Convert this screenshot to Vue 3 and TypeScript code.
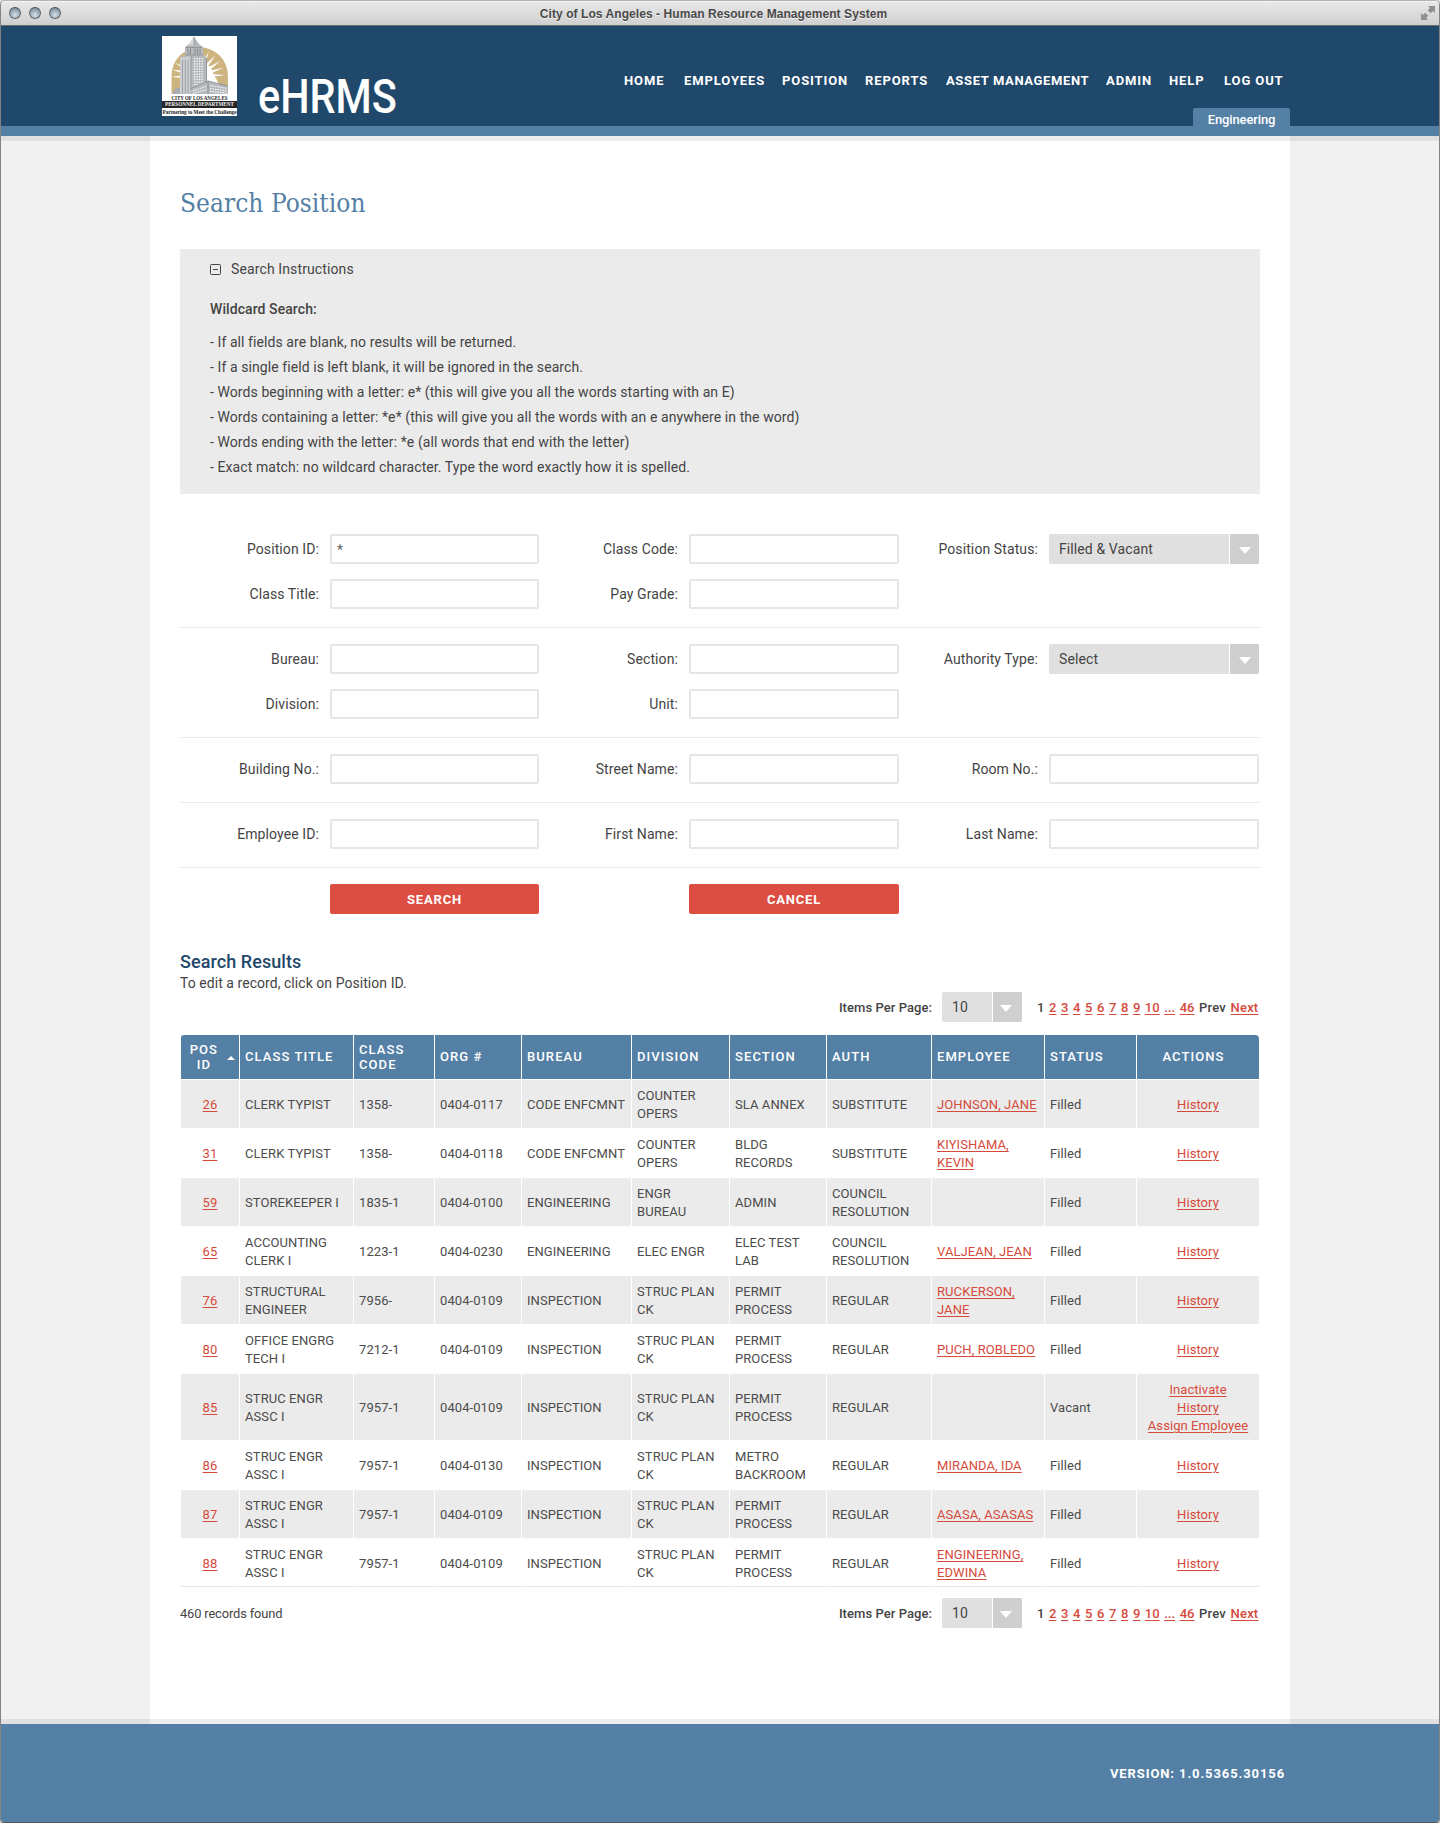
<script setup lang="ts">
interface NavItem { label: string; width: number; tight?: boolean }
interface Field { label: string; value?: string; select?: boolean }
interface Row {
  id: number
  cells: string[]
  employee: string
  status: string
  actions: string[]
}

const nav: NavItem[] = [
  { label: 'HOME', width: 60 },
  { label: 'EMPLOYEES', width: 98 },
  { label: 'POSITION', width: 83 },
  { label: 'REPORTS', width: 81 },
  { label: 'ASSET MANAGEMENT', width: 160, tight: true },
  { label: 'ADMIN', width: 63 },
  { label: 'HELP', width: 55 },
  { label: 'LOG OUT', width: 61 },
]

const tips: string[] = [
  '- If all fields are blank, no results will be returned.',
  '- If a single field is left blank, it will be ignored in the search.',
  '- Words beginning with a letter: e* (this will give you all the words starting with an E)',
  '- Words containing a letter: *e* (this will give you all the words with an e anywhere in the word)',
  '- Words ending with the letter: *e (all words that end with the letter)',
  '- Exact match: no wildcard character. Type the word exactly how it is spelled.',
]

const groups: Field[][][] = [
  [
    [{ label: 'Position ID:', value: '*' }, { label: 'Class Code:' }, { label: 'Position Status:', value: 'Filled & Vacant', select: true }],
    [{ label: 'Class Title:' }, { label: 'Pay Grade:' }],
  ],
  [
    [{ label: 'Bureau:' }, { label: 'Section:' }, { label: 'Authority Type:', value: 'Select', select: true }],
    [{ label: 'Division:' }, { label: 'Unit:' }],
  ],
  [[{ label: 'Building No.:' }, { label: 'Street Name:' }, { label: 'Room No.:' }]],
  [[{ label: 'Employee ID:' }, { label: 'First Name:' }, { label: 'Last Name:' }]],
]

const headers: string[] = ['CLASS TITLE', 'CLASS\nCODE', 'ORG #', 'BUREAU', 'DIVISION', 'SECTION', 'AUTH', 'EMPLOYEE', 'STATUS']
const widths: number[] = [59, 114, 81, 87, 110, 98, 97, 105, 113, 92, 122]

const rows: Row[] = [
  { id: 26, cells: ['CLERK TYPIST', '1358-', '0404-0117', 'CODE ENFCMNT', 'COUNTER\nOPERS', 'SLA ANNEX', 'SUBSTITUTE'], employee: 'JOHNSON, JANE', status: 'Filled', actions: ['History'] },
  { id: 31, cells: ['CLERK TYPIST', '1358-', '0404-0118', 'CODE ENFCMNT', 'COUNTER\nOPERS', 'BLDG\nRECORDS', 'SUBSTITUTE'], employee: 'KIYISHAMA,\nKEVIN', status: 'Filled', actions: ['History'] },
  { id: 59, cells: ['STOREKEEPER I', '1835-1', '0404-0100', 'ENGINEERING', 'ENGR\nBUREAU', 'ADMIN', 'COUNCIL\nRESOLUTION'], employee: '', status: 'Filled', actions: ['History'] },
  { id: 65, cells: ['ACCOUNTING\nCLERK I', '1223-1', '0404-0230', 'ENGINEERING', 'ELEC ENGR', 'ELEC TEST\nLAB', 'COUNCIL\nRESOLUTION'], employee: 'VALJEAN, JEAN', status: 'Filled', actions: ['History'] },
  { id: 76, cells: ['STRUCTURAL\nENGINEER', '7956-', '0404-0109', 'INSPECTION', 'STRUC PLAN\nCK', 'PERMIT\nPROCESS', 'REGULAR'], employee: 'RUCKERSON,\nJANE', status: 'Filled', actions: ['History'] },
  { id: 80, cells: ['OFFICE ENGRG\nTECH I', '7212-1', '0404-0109', 'INSPECTION', 'STRUC PLAN\nCK', 'PERMIT\nPROCESS', 'REGULAR'], employee: 'PUCH, ROBLEDO', status: 'Filled', actions: ['History'] },
  { id: 85, cells: ['STRUC ENGR\nASSC I', '7957-1', '0404-0109', 'INSPECTION', 'STRUC PLAN\nCK', 'PERMIT\nPROCESS', 'REGULAR'], employee: '', status: 'Vacant', actions: ['Inactivate', 'History', 'Assign Employee'] },
  { id: 86, cells: ['STRUC ENGR\nASSC I', '7957-1', '0404-0130', 'INSPECTION', 'STRUC PLAN\nCK', 'METRO\nBACKROOM', 'REGULAR'], employee: 'MIRANDA, IDA', status: 'Filled', actions: ['History'] },
  { id: 87, cells: ['STRUC ENGR\nASSC I', '7957-1', '0404-0109', 'INSPECTION', 'STRUC PLAN\nCK', 'PERMIT\nPROCESS', 'REGULAR'], employee: 'ASASA, ASASAS', status: 'Filled', actions: ['History'] },
  { id: 88, cells: ['STRUC ENGR\nASSC I', '7957-1', '0404-0109', 'INSPECTION', 'STRUC PLAN\nCK', 'PERMIT\nPROCESS', 'REGULAR'], employee: 'ENGINEERING,\nEDWINA', status: 'Filled', actions: ['History'] },
]

const pages: string[] = ['1', '2', '3', '4', '5', '6', '7', '8', '9', '10', '...', '46', 'Prev', 'Next']
const isLink = (p: string): boolean => p !== '1' && p !== 'Prev'
const isWord = (p: string): boolean => p === 'Prev' || p === 'Next'

// Sunburst beams behind the tower: angle in degrees from the vertical.
const beams: number[] = [-92, -76, -60, -44, 8, 24, 40, 56, 72, 88]
const floors: number[] = Array.from({ length: 11 }, (_, i) => 22 + i * 2.6)
const bays: number[] = [32, 34.5, 37, 39.500]
</script>

<template>
  <div class="window">
    <div class="titlebar">
      <div class="lights"><i></i><i></i><i></i></div>
      <span class="caption">City of Los Angeles - Human Resource Management System</span>
      <svg class="expand" width="14" height="14" viewBox="0 0 14 14">
        <path d="M7 0h7v7l-2-2-2.300 2.300L6.700 4.300 9 2zM0 7l2 2 2.300-2.300 3 3L5 12l2 2H0z" fill="#8f8f8f" />
      </svg>
    </div>

    <header class="header">
      <div class="header-inner">
        <svg class="logo" width="75" height="80" viewBox="0 0 75 80">
          <rect width="75" height="80" fill="#fff" />
          <path d="M9.500 58V39.500a28.200 28.200 0 0 1 56.400 0V58z" fill="#cdb47f" />
          <path d="M18 58V36q0-10 14-12 17 1 20 16 6 6 6 18z" fill="#fff" />
          <path v-for="b in beams" :key="b" d="M33 40L36 13 39 40z" fill="#fff" :transform="`rotate(${b} 36 40)`" />
          <path d="M10 58l3-5 6-2v7z" fill="#a9acb0" />
          <path d="M18 58V22l5-3v-8l4-3 5-7.500L37 8l4 3v8l4 3v36z" fill="#b7babd" />
          <path d="M27 8l5-7.500V9h-5z" fill="#d9dadc" />
          <path d="M18 22l11-2v38H18z" fill="#cbcdd0" />
          <path d="M32 1v8M24 11.500h16M23 19h18M29 20v38M44.500 22v26" stroke="#83878c" stroke-width="0.700" fill="none" />
          <path d="M26 12.500v6M28.500 12.500v6M33 12.500v6M35.500 12.500v6M38 12.500v6" stroke="#858a90" stroke-width="1" />
          <path d="M20.500 24v34M23.300 24v34M26.100 24v34" stroke="#989ca1" stroke-width="0.900" />
          <g fill="#fff">
            <template v-for="f in floors" :key="f">
              <rect v-for="x in bays" :key="x" :x="x" :y="f" width="1.200" height="1.300" />
            </template>
          </g>
          <path d="M28 58v-5l18-8 20 5v8z" fill="#b7babd" />
          <path d="M28 53l18-8 20 5M46 45v13" stroke="#83878c" stroke-width="0.800" fill="none" />
          <path d="M31 55l14-5M31 57.500l14-4M48 49.500l17 3M48 52.500l17 2.500M48 55.500l17 1.500" stroke="#fff" stroke-width="1" stroke-dasharray="1.500 1" fill="none" />
          <text x="37.500" y="63.500" text-anchor="middle" class="logo-text" textLength="56" lengthAdjust="spacingAndGlyphs" fill="#222">CITY OF LOS ANGELES</text>
          <rect y="65" width="75" height="7" fill="#262626" />
          <text x="37.500" y="70.300" text-anchor="middle" class="logo-text" textLength="69" lengthAdjust="spacingAndGlyphs" fill="#eee">PERSONNEL DEPARTMENT</text>
          <text x="37.500" y="77.700" text-anchor="middle" class="logo-tag" textLength="74" lengthAdjust="spacingAndGlyphs" fill="#222">Partnering to Meet the Challenge</text>
        </svg>
        <div class="brand">eHRMS</div>
        <div class="header-right">
          <nav class="nav">
            <a v-for="n in nav" :key="n.label" :class="{ tight: n.tight }" :style="{ width: n.width + 'px' }">{{ n.label }}</a>
          </nav>
          <div class="dept">Engineering</div>
        </div>
      </div>
    </header>

    <main class="body">
      <div class="page">
        <h1>Search Position</h1>

        <section class="tips">
          <div class="tips-head">
            <svg width="11" height="11" viewBox="0 0 11 11">
              <rect x="0.500" y="0.500" width="10" height="10" rx="1" fill="none" stroke="#444" />
              <path d="M3 5.500h5" stroke="#444" />
            </svg>
            <span>Search Instructions</span>
          </div>
          <h3>Wildcard Search:</h3>
          <p v-for="t in tips" :key="t">{{ t }}</p>
        </section>

        <form class="form" @submit.prevent>
          <div v-for="(g, gi) in groups" :key="gi" class="group">
            <div v-for="(r, ri) in g" :key="ri" class="line">
              <div v-for="f in r" :key="f.label" class="field">
                <label>{{ f.label }}</label>
                <div v-if="f.select" class="select">
                  <span>{{ f.value }}</span>
                  <b><svg width="12" height="7" viewBox="0 0 12 7"><path d="M0 0h12L6 7z" fill="#fff" /></svg></b>
                </div>
                <div v-else class="input">{{ f.value }}</div>
              </div>
            </div>
          </div>
          <div class="line buttons">
            <div class="field"><button type="button">SEARCH</button></div>
            <div class="field"><button type="button">CANCEL</button></div>
          </div>
        </form>

        <h2>Search Results</h2>
        <p class="hint">To edit a record, click on Position ID.</p>

        <div class="pager">
          <span class="ipp">Items Per Page:</span>
          <div class="select small">
            <span>10</span>
            <b><svg width="12" height="7" viewBox="0 0 12 7"><path d="M0 0h12L6 7z" fill="#fff" /></svg></b>
          </div>
          <div class="pages">
            <span v-for="p in pages" :key="p" :class="{ link: isLink(p), word: isWord(p) }">{{ p }}</span>
          </div>
        </div>

        <table>
          <colgroup><col v-for="(w, i) in widths" :key="i" :style="{ width: w + 'px' }" /></colgroup>
          <thead>
            <tr>
              <th class="pos">
                <div class="pos-in">
                  <span>POS<br />ID</span>
                  <svg width="8" height="4" viewBox="0 0 8 4"><path d="M0 4L4 0l4 4z" fill="#fff" /></svg>
                </div>
              </th>
              <th v-for="h in headers" :key="h">{{ h }}</th>
              <th class="act">ACTIONS</th>
            </tr>
          </thead>
          <tbody>
            <tr v-for="r in rows" :key="r.id">
              <td class="mid"><a class="link">{{ r.id }}</a></td>
              <td v-for="(c, i) in r.cells" :key="i">{{ c }}</td>
              <td><a class="link">{{ r.employee }}</a></td>
              <td>{{ r.status }}</td>
              <td class="mid"><div v-for="a in r.actions" :key="a"><a class="link">{{ a }}</a></div></td>
            </tr>
          </tbody>
        </table>

        <div class="pager bottom">
          <span class="count">460 records found</span>
          <span class="ipp">Items Per Page:</span>
          <div class="select small">
            <span>10</span>
            <b><svg width="12" height="7" viewBox="0 0 12 7"><path d="M0 0h12L6 7z" fill="#fff" /></svg></b>
          </div>
          <div class="pages">
            <span v-for="p in pages" :key="p" :class="{ link: isLink(p), word: isWord(p) }">{{ p }}</span>
          </div>
        </div>
      </div>
    </main>

    <footer class="footer"><span>VERSION: 1.0.5365.30156</span></footer>
  </div>
</template>

<style>
html, body { margin: 0; background: #d8d8d8; }
</style>

<style scoped>
* { box-sizing: border-box; }
.window {
  width: 1440px;
  height: 1823px;
  display: flex;
  flex-direction: column;
  border: 1px solid #838383;
  border-top-color: #b4b4b4;
  border-bottom-color: #555;
  border-radius: 5px 5px 4px 4px;
  overflow: hidden;
  font-family: Roboto, "Liberation Sans", sans-serif;
  font-size: 14px;
  color: #444;
  background: #f1f1f1;
}
.titlebar {
  height: 25px;
  flex: none;
  display: flex;
  align-items: center;
  justify-content: space-between;
  padding: 0 4px 0 8px;
  border-top: 1px solid #f4f4f4;
  border-bottom: 1px solid #6c6c6c;
  background: linear-gradient(#e8e8e8, #cfcfcf);
}
.lights { display: flex; gap: 8px; width: 70px; margin-top: -2px; }
.lights i {
  width: 12px;
  height: 12px;
  border-radius: 50%;
  border: 1px solid #5f6871;
  border-top-color: #434c55;
  background: radial-gradient(circle at 50% 70%, #d6e0e6, #8495a2 75%);
}
.caption {
  font: bold 12px/22px "Liberation Sans", Arial, sans-serif;
  letter-spacing: 0.070px;
  color: #484848;
  text-shadow: 0 1px 0 #f4f4f4;
  margin-right: 73px;
}
.expand { margin-top: -2px; }
.header {
  height: 110px;
  flex: none;
  background: #1f486b;
  border-bottom: 10px solid #5580a5;
}
.header-inner { width: 1140px; height: 100px; margin: 0 auto; display: flex; }
.logo { margin: 10px 0 0 12px; flex: none; }
.logo-text { font: bold 5.100px "Liberation Serif", serif; }
.logo-tag { font: bold 5.400px "Liberation Serif", serif; }
.brand {
  margin: 42px 0 0 21px;
  width: 150px;
  font-size: 49px;
  font-weight: 500;
  line-height: 58px;
  color: #fff;
  transform: scaleX(0.845);
  transform-origin: left;
}
.header-right { flex: 1; display: flex; flex-direction: column; align-items: flex-end; justify-content: space-between; }
.nav { display: flex; padding: 45px 5px 0 0; }
.nav a { font-size: 13px; font-weight: 700; line-height: 20px; letter-spacing: 0.900px; color: #fff; white-space: nowrap; }
.nav a.tight { letter-spacing: 0.630px; }
.dept {
  width: 97px;
  height: 18px;
  border-radius: 2px 2px 0 0;
  background: #5580a5;
  color: #fff;
  font-size: 13px;
  font-weight: 500;
  line-height: 23px;
  letter-spacing: -0.130px;
  text-align: center;
}
.body {
  position: relative;
  height: 1588px;
  flex: none;
  background: #f1f1f1;
  display: flex;
  justify-content: center;
}
.body::before, .body::after {
  content: "";
  position: absolute;
  left: 0;
  right: 0;
  height: 5px;
  background: rgba(0, 0, 0, 0.065);
}
.body::before { top: 0; }
.body::after { bottom: 0; }
.page {
  width: 1140px;
  height: 1588px;
  padding: 0 30px;
  background: #fff;
}
h1 {
  margin: 0;
  padding: 50px 0 29px;
  font: 400 26px/34px "DejaVu Serif Condensed", "DejaVu Serif", serif;
  font-stretch: condensed;
  letter-spacing: 0.050px;
  color: #5580a5;
}
.tips { height: 245px; padding: 10px 30px 0; background: #ebebeb; letter-spacing: 0.080px; }
.tips-head { display: flex; align-items: center; gap: 10px; line-height: 20px; letter-spacing: 0.120px; }
.tips h3 { margin: 20px 0 11px; font-size: 14px; font-weight: 500; line-height: 20px; }
.tips p { margin: 0; line-height: 25px; }
.form { padding-top: 40px; letter-spacing: 0.100px; }
.group { border-bottom: 1px solid #ebebeb; padding-bottom: 18px; margin-bottom: 16px; display: flex; flex-direction: column; gap: 15px; }
.line { display: grid; grid-template-columns: 359px 360px 360px; }
.field { display: flex; justify-content: flex-end; align-items: center; height: 30px; }
.field label { padding-right: 11px; }
.input {
  width: 210px;
  height: 30px;
  border: 2px solid #e6e6e6;
  border-radius: 2px;
  background: #fff;
  padding-left: 5px;
  line-height: 28px;
  color: #666;
}
.field:first-child .input, .field:first-child button { width: 209px; }
.select { width: 210px; height: 30px; display: flex; border-radius: 2px; overflow: hidden; background: #e0e0e0; }
.select span { flex: 1; padding-left: 10px; line-height: 30px; }
.select b { width: 30px; border-left: 1px solid #fff; background: #cfcfcf; display: flex; align-items: center; justify-content: center; padding-top: 3px; }
button {
  width: 210px;
  height: 30px;
  border: 0;
  border-radius: 2px;
  background: #dc4e41;
  color: #fff;
  font: 700 13px/28px Roboto, sans-serif;
  letter-spacing: 0.800px;
  padding: 2px 0 0;
}
h2 { margin: 37px 0 0; font-size: 18px; font-weight: 500; line-height: 22px; letter-spacing: 0.070px; color: #1f486b; }
.hint { margin: 0; line-height: 20px; letter-spacing: 0.050px; }
.pager { display: flex; align-items: center; justify-content: flex-end; height: 30px; margin: -1px 0 13px; font-size: 13px; }
.ipp { font-weight: 500; padding-right: 10px; letter-spacing: 0.060px; }
.select.small { width: 80px; font-size: 14px; }
.select.small span { letter-spacing: 0.200px; }
.select.small b { padding-right: 3px; }
.pages { display: flex; gap: 4.600px; font-weight: 500; padding-left: 15px; width: 238px; }
.word { letter-spacing: 0.200px; }
.count { margin-right: auto; letter-spacing: 0; font-size: 12.900px; letter-spacing: -0.150px; }
.link { color: #d64a3c; text-decoration: underline; text-underline-offset: 2px; }
table {
  width: 1078px;
  margin-left: 1px;
  table-layout: fixed;
  border-collapse: separate;
  border-spacing: 0;
  font-size: 13px;
}
th {
  height: 45px;
  padding: 0 0 1px 5px;
  background: #5580a5;
  background-clip: padding-box;
  border-right: 1px solid #fff;
  border-bottom: 1px solid #fff;
  color: #fff;
  font-weight: 500;
  line-height: 15px;
  letter-spacing: 1.080px;
  text-align: left;
  white-space: pre-line;
}
th:first-child { border-top-left-radius: 3px; }
th:last-child { border-top-right-radius: 4px; border-right: 0; }
th.pos { padding: 0; }
.pos-in { display: flex; align-items: center; justify-content: flex-end; gap: 9px; padding-right: 4px; text-align: center; }
.pos-in svg { margin-top: 1px; }
th.act { text-align: center; padding: 0 9px 1px 0; }
td {
  height: 49px;
  padding: 7px 0 5px 5px;
  line-height: 18px;
  letter-spacing: 0.080px;
  white-space: pre-line;
  color: #4c4c4c;
  border-right: 1px solid #fff;
  border-bottom: 1px solid #fff;
}
td:last-child { border-right: 0; }
td.mid { text-align: center; padding: 7px 0 5px; }
tbody tr:nth-child(odd) td { background: #ebebeb; }
tbody tr:last-child td { height: 48px; padding-bottom: 4px; border-bottom-color: #e6e6e6; }
.pager.bottom { margin: 11px 0 0; }
.footer {
  flex: 1;
  background: #5580a5;
  display: flex;
  justify-content: flex-end;
  padding: 40px 154px 0 0;
}
.footer span { color: #fff; font-size: 13px; font-weight: 700; line-height: 20px; letter-spacing: 0.900px; }
</style>
